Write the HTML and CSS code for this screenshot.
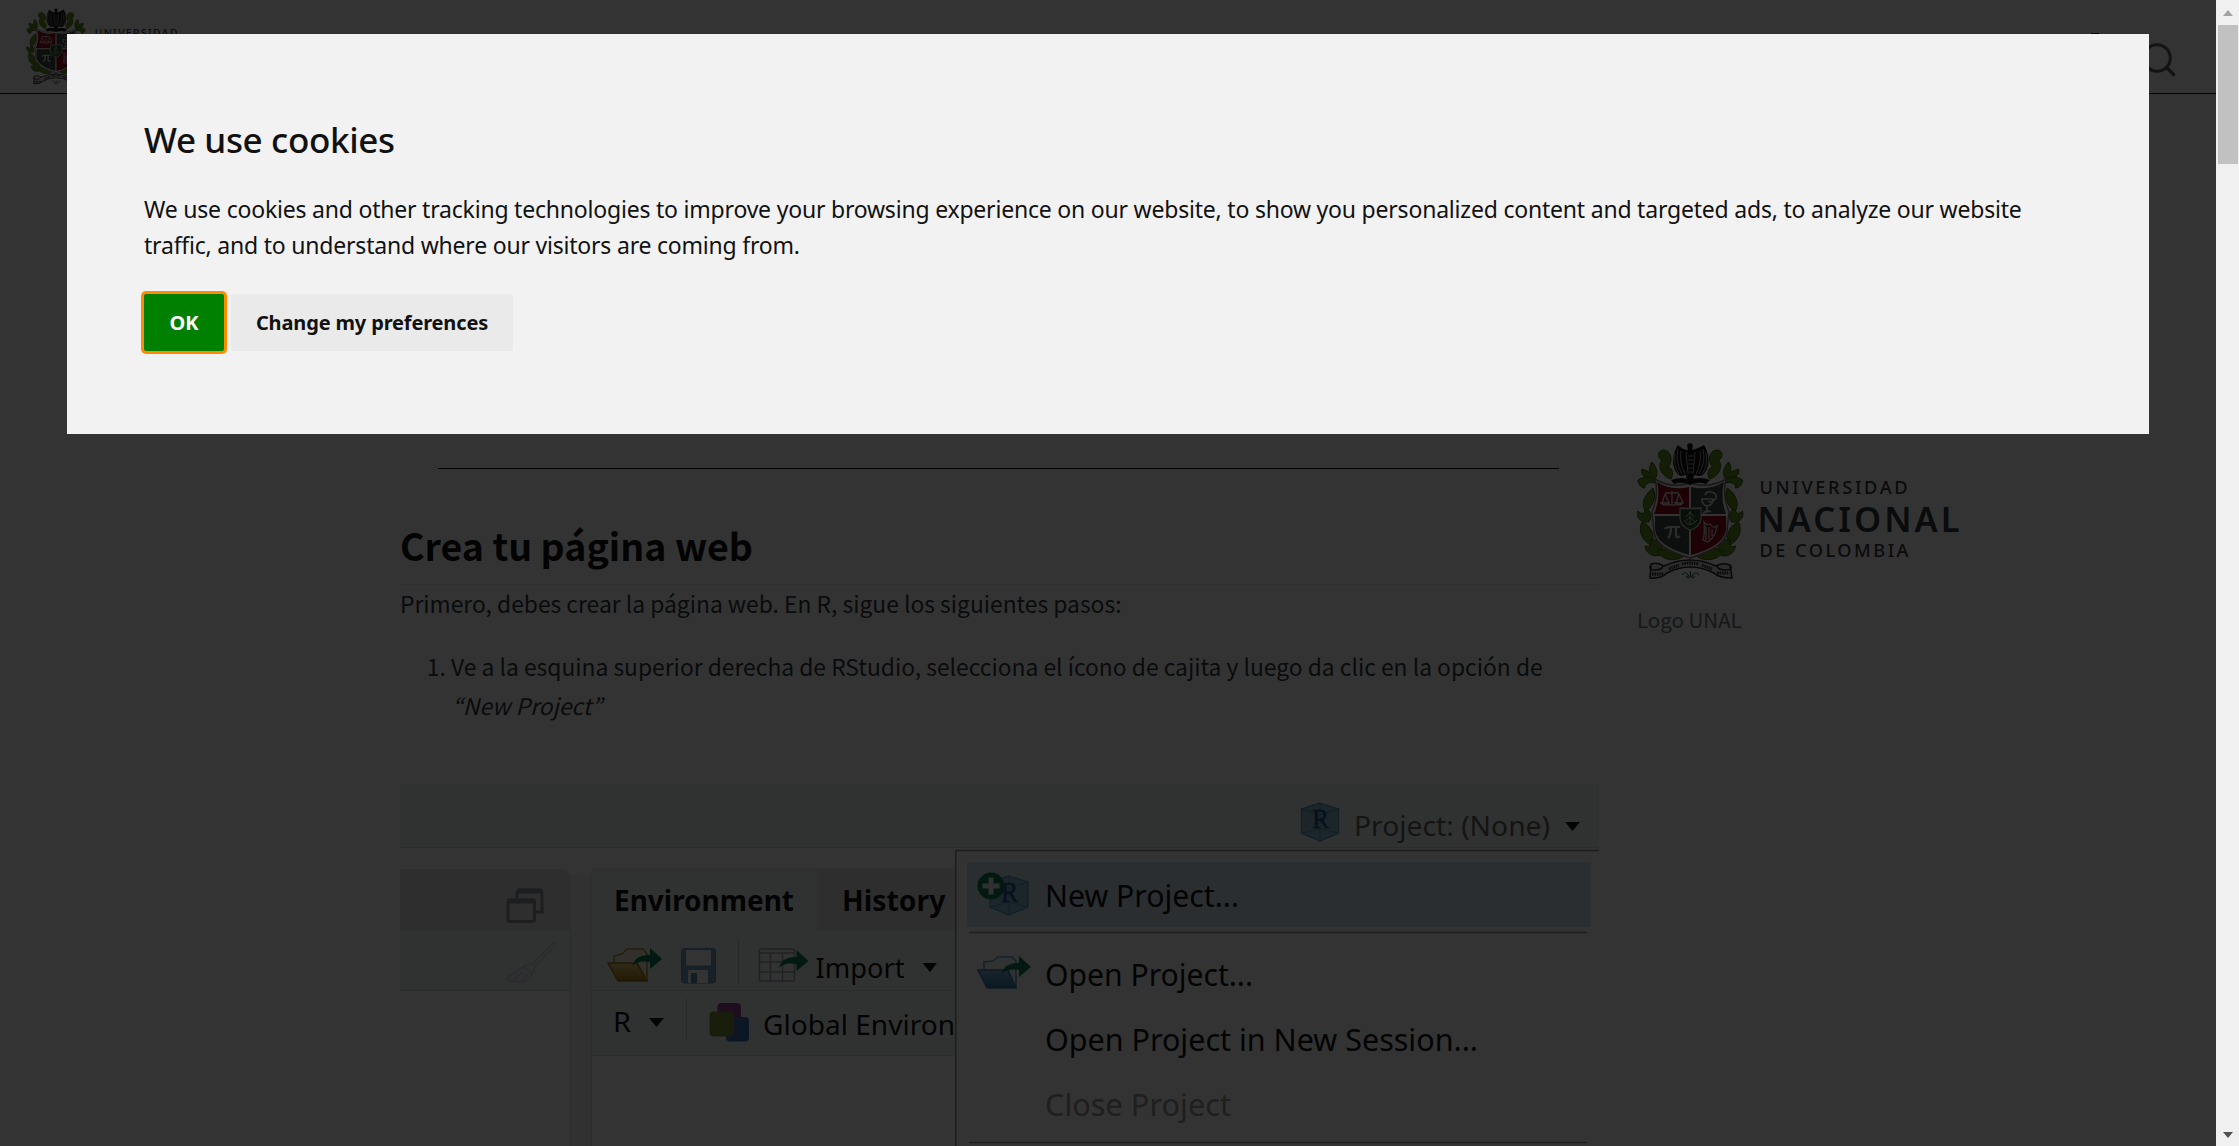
FILE: index.html
```html
<!DOCTYPE html>
<html lang="es">
<head>
<meta charset="utf-8">
<title>Crea tu página web</title>
<link rel="stylesheet" href="styles.css">
</head>
<body>
<svg class="defs" aria-hidden="true">
  <defs>
    <linearGradient id="gold" x1="0" y1="0" x2="0" y2="1"><stop offset="0" stop-color="#f3d27a"/><stop offset="1" stop-color="#b58210"/></linearGradient>
    <linearGradient id="azure" x1="0" y1="0" x2="0" y2="1"><stop offset="0" stop-color="#7fb4dc"/><stop offset="1" stop-color="#2d77ad"/></linearGradient>
    <g id="leaves" fill="#64901a" stroke="#3a5a0a" stroke-width="1">
      <path d="M34 37C24 34 20 24 25 18C20 16 20 8 27 8C35 9 36 20 31 25C37 27 36 33 34 37Z"/>
      <path d="M17 38C7 37 3 31 5 27C9 28 12 30 13 31C12 27 13 22 15 20C20 25 22 33 17 38Z"/>
      <path d="M18 41C11 39 7 43 8 46C4 46 1 42 1 38C8 33 18 35 20 39Z"/>
      <path d="M9 70C3 62 8 52 16 46C20 54 17 62 9 70Z"/>
      <path d="M12 80C3 81 -1 75 1 69C5 73 8 72 8 67C15 68 15 76 12 80Z"/>
      <path d="M15 104C4 98 1 88 5 80C15 84 18 94 15 104Z"/>
      <path d="M26 111C20 117 9 113 8 104C13 106 15 102 13 98C21 96 26 103 26 111Z"/>
      <path d="M46 115C34 121 24 116 20 109C32 104 42 107 46 115Z"/>
    </g>
    <symbol id="unal" viewBox="0 0 323 138">
      <use href="#leaves"/>
      <use href="#leaves" transform="translate(106.500 0) scale(-1 1)"/>
      <path d="M18 37Q34 47 53 41Q72 47 89 37Q85 52 92 70Q90 87 90 91Q87 106 53 116Q20 107 17 91L15 70Q22 52 18 37Z" fill="#fff" stroke="#777" stroke-width="1.500"/>
      <path d="M20 40Q34 49 52 45V72H17Q24 55 20 40Z" fill="#940618"/>
      <path d="M54 45Q72 49 87 40Q83 56 89 72H54Z" fill="#444e4b"/>
      <path d="M18 74H52V113Q20 104 18 88Z" fill="#444e4b"/>
      <path d="M54 74H89V88Q87 104 54 113Z" fill="#940618"/>
      <path d="M43 66Q53 67 64 66V77Q63 85 53.500 88Q44 85 43 77Z" fill="#26542c" stroke="#cdd3cc" stroke-width="1.300"/>
      <path d="M53 69V83M49 75L53 70L57 75M48 80L53 75L58 80M47 78Q53 87 60 78" fill="none" stroke="#c5d2c3" stroke-width="1"/>
      <g fill="none" stroke="#ddd" stroke-width="1.300">
        <path d="M28 51H42M35 49V62M31 63H39M28 52L25 61M28 52L32 61M42 52L39 61M42 52L46 61M24 61Q28 65 32 61ZM38 61Q42 65 46 61Z"/>
        <path d="M68 53Q69 49 74 50Q80 51 79 56Q77 60 71 60M65 57H76Q76 63 70 64Q65 63 65 57ZM70 64V71M66 72Q69 67 74 70" stroke-width="1.600"/>
        <path d="M28 87Q29 85 33 85H43M34 85Q34 93 31 96M39 85V94Q40 97 43 94" stroke-width="2.200"/>
        <path d="M67 80Q68 93 66 98L71 100Q79 94 80 84Q76 87 73 82Q70 84 67 80ZM69 84V98M72 85V97M75 87V94"/>
      </g>
      <g fill="#111">
        <path d="M50 3Q53-1 56 3L55 8Q60 7 67 3Q73 12 71 24Q68 34 62 34L57 33L56 38H50L49 33L44 34Q38 32 36 22Q36 9 41 3Q46 8 51 8Z"/>
        <path d="M34 38Q45 34 53 38Q63 34 73 38L69 42Q60 39 53 43Q45 39 37 42Z"/>
      </g>
      <path d="M38 11Q36 24 42 32M41 7Q38 20 45 32M44 9Q42 20 48 32M69 11Q71 24 65 32M66 7Q69 20 62 32M63 9Q65 20 59 32M51 14H56M51 18H56M51 22H56M51 26H56M52 30H55M49 10L51 32M58 10L56 32" fill="none" stroke="#bbb" stroke-width=".9"/>
      <path d="M14 122Q21 120 27 124Q53 112 79 124Q86 120 93 123L95 136Q82 136 77 131Q53 119 30 131Q24 137 13 136Z" fill="#ddd" stroke="#222" stroke-width="1.500"/>
      <path d="M13 124Q12 128 18 128Q25 128 26 124M94 124Q95 128 89 128Q81 128 80 124" fill="none" stroke="#222" stroke-width="1.500"/>
      <path d="M15 132H27M32 127L42 123M45 122Q53 120 62 122M65 123L75 127M80 131H92" fill="none" stroke="#333" stroke-width="3" stroke-dasharray="1.600 .8"/>
      <path d="M45 133Q48 128 52 134Q53 138 49 134M62 133Q59 128 55 134Q54 138 58 134M53.500 129V135" fill="none" stroke="#466f4a" stroke-width="1.200"/>
      <g fill="#343a3c" font-family="Noto Sans, sans-serif">
        <text x="122.500" y="52" font-size="18.200" font-weight="500" textLength="148">UNIVERSIDAD</text>
        <text x="120.500" y="89.500" font-size="34.500" font-weight="600" textLength="202">NACIONAL</text>
        <text x="122.500" y="115" font-size="18.200" font-weight="500" textLength="149">DE COLOMBIA</text>
      </g>
    </symbol>
    <symbol id="cube" viewBox="0 0 40 41">
      <path d="M20 1L39 7V32L20 40L1 32V7Z" fill="#8bb8cc" stroke="#4b9ab5" stroke-width="1.200"/>
      <path d="M1 7L20 13L39 7M20 1V40M1 32L20 27L39 32" fill="none" stroke="#4b9ab5" stroke-width="1"/>
      <text x="12" y="27" textLength="17" lengthAdjust="spacingAndGlyphs" font-family="Liberation Serif, serif" font-size="29" fill="#2c5394" stroke="#2c5394" stroke-width=".7">R</text>
    </symbol>
    <path id="swoosh" d="M0 18Q4 6 18 7V0L30 11L18 21V14Q6 12 0 18Z" fill="#087c53"/>
  </defs>
</svg>
<div class="window">
  <div class="page">
    <header class="navbar">
      <svg class="nav-logo"><use href="#unal"/></svg>
      <div class="nav-tools">
        <svg class="nav-mark" viewBox="0 0 8 20"><path d="M0 0H8V3H3V20H0Z" fill="#111"/></svg>
        <svg class="nav-search" viewBox="0 0 34 34"><circle cx="15" cy="15" r="13.300" fill="none" stroke="#5c6167" stroke-width="3"/><path d="M24.500 24.500L31.500 31.500" stroke="#5c6167" stroke-width="3.500" stroke-linecap="round"/></svg>
      </div>
    </header>
    <div class="layout">
      <main class="content">
        <hr class="rule">
        <h2 class="section-title">Crea tu página web</h2>
        <p class="intro">Primero, debes crear la página web. En R, sigue los siguientes pasos:</p>
        <ol class="steps">
          <li>Ve a la esquina superior derecha de RStudio, selecciona el ícono de cajita y luego da clic en la opción de<br><em class="quoted">“New Project”</em></li>
        </ol>
        <svg class="shot" viewBox="400 784 1199 362">
          <rect x="400" y="784" width="1199" height="362" fill="#fefefe"/>
          <rect x="400" y="784" width="1199" height="63" fill="#f0f6f5"/>
          <path d="M400 847.500H1599" stroke="#cfdede"/>
          <!-- left pane -->
          <path d="M400 869H561Q570 869 570 879V929H400Z" fill="#e6e6e7"/>
          <rect x="400" y="929" width="170" height="61" fill="#f0f5f5"/>
          <path d="M400 929.500H570M400 990.500H570" stroke="#d5dfe0"/>
          <rect x="570" y="875" width="21" height="271" fill="#f6f6f8"/>
          <path d="M570.500 875V1146M591.500 1146V875" stroke="#dcdfe1"/>
          <g fill="none" stroke="#8d979f" stroke-width="3"><path d="M517 898V893Q517 890 520.500 890H538.500Q542 890 542 893V912H535.500"/><rect x="508" y="900" width="26.500" height="21.500" rx="1.500"/></g>
          <path d="M517 891H541.500M508 901H534.500" stroke="#8d979f" stroke-width="5"/>
          <path d="M553 943L533 963L524 966L508 977Q506 981 510 981L524 982Q532 979 535 967L555 945Q556 941 553 943Z" fill="#eceef2" stroke="#cdd1da" stroke-width="1.300"/>
          <path d="M524 966L532 974M514 980L522 972M521 981L527 975" stroke="#cdd1da" stroke-width="1.300"/>
          <!-- environment pane -->
          <path d="M591 990V875Q591 869 597 869H956V990Z" fill="#f0f6f5"/>
          <rect x="817" y="869" width="139" height="60" fill="#e6e6e7"/>
          <rect x="592" y="991" width="364" height="64" fill="#f0f5f5"/>
          <path d="M591 990V875Q591 869 597 869H956M817.500 869V929.500H956M591 990.500H956M591 1055.500H956" fill="none" stroke="#d5dfe0"/>
          <g font-family="Noto Sans, sans-serif" font-size="28" fill="#111">
            <text x="614" y="911" font-weight="700" textLength="180" lengthAdjust="spacingAndGlyphs">Environment</text>
            <text x="842" y="911" font-weight="700" textLength="103.500" lengthAdjust="spacingAndGlyphs">History</text>
            <text x="815.500" y="977.500" textLength="89" lengthAdjust="spacingAndGlyphs">Import</text>
            <text x="613" y="1032" textLength="18" lengthAdjust="spacingAndGlyphs">R</text>
            <text x="763" y="1035" textLength="192" lengthAdjust="spacingAndGlyphs">Global Environ</text>
            <text x="1354" y="836" textLength="196" lengthAdjust="spacingAndGlyphs" fill="#666">Project: (None)</text>
          </g>
          <path d="M922.500 963H937L930 972ZM649 1018H664L656.500 1027ZM1565 822H1580L1572.500 831Z" fill="#111"/>
          <path d="M738.500 940V984M686.500 998V1040" stroke="#c7cdcd"/>
          <path d="M614 965V956L622 954L627 949H643L647 954V981" fill="#f5f0df" stroke="#bd9641" stroke-width="1.600"/>
          <path d="M608 963H637L647 981H618Z" fill="url(#gold)" stroke="#a87e1b" stroke-width="1.600"/>
          <use href="#swoosh" x="632" y="948"/>
          <rect x="681.500" y="948.500" width="34" height="34.500" rx="3" fill="#7ba2c6" stroke="#628fb8"/>
          <rect x="686" y="950" width="25" height="15.500" fill="#fcfcfc"/><rect x="688" y="970" width="20" height="13" fill="#fcfcfc"/><rect x="691" y="973" width="6" height="10" fill="#628fb8"/>
          <rect x="759.500" y="949" width="35" height="32" rx="2" fill="#f8f9fb" stroke="#9fa6b3" stroke-width="1.500"/>
          <path d="M759 953H795M759 962H795M759 972H795M770.500 953V981M782.500 953V981" stroke="#9fa6b3" stroke-width="1.500"/>
          <use href="#swoosh" x="778.500" y="950"/>
          <rect x="717.500" y="1003" width="23.500" height="25" rx="4" fill="#914099"/><rect x="726" y="1017" width="23" height="24.500" rx="4" fill="#4170b4"/><rect x="709.500" y="1011.500" width="24" height="25" rx="4" fill="#7e963f"/>
          <use href="#cube" x="1300" y="802" width="40" height="40"/>
          <!-- project menu -->
          <rect x="955.500" y="850" width="643.500" height="296" fill="#fefefe"/>
          <path d="M955.800 1146V850.500H1599" fill="none" stroke="#8d8d8d" stroke-width="1.500"/>
          <rect x="967" y="862" width="623.500" height="65" fill="#d6e3ef"/>
          <path d="M969 932.500H1587M969 1142.500H1587" stroke="#999" stroke-width="1.300"/>
          <use href="#cube" x="989" y="875" width="40" height="41"/>
          <circle cx="991" cy="886" r="13.500" fill="#087c53"/><path d="M991 877.500V894.500M982.500 886H999.500" stroke="#e8f2f2" stroke-width="5"/>
          <path d="M984 970V962L993 961L998 957H1012L1016 961V988" fill="#f3f8fb" stroke="#68a5c7" stroke-width="1.600"/>
          <path d="M978 970H1008L1016 988H987Z" fill="url(#azure)" stroke="#3a83b2" stroke-width="1.600"/>
          <use href="#swoosh" x="1001" y="956"/>
          <g font-family="Noto Sans, sans-serif" font-size="31" fill="#111">
            <text x="1045" y="907" textLength="194" lengthAdjust="spacingAndGlyphs">New Project...</text>
            <text x="1045" y="986" textLength="208" lengthAdjust="spacingAndGlyphs">Open Project...</text>
            <text x="1045" y="1051" textLength="433" lengthAdjust="spacingAndGlyphs">Open Project in New Session...</text>
            <text x="1045" y="1116" textLength="186" lengthAdjust="spacingAndGlyphs" fill="#999">Close Project</text>
          </g>
        </svg>
      </main>
      <aside class="sidebar">
        <svg class="side-logo"><use href="#unal"/></svg>
        <p class="caption">Logo UNAL</p>
      </aside>
    </div>
    <div class="overlay">
      <section class="dialog">
        <h1 class="dialog-title">We use cookies</h1>
        <p class="dialog-text">We use cookies and other tracking technologies to improve your browsing experience on our website, to show you personalized content and targeted ads, to analyze our website<br>traffic, and to understand where our visitors are coming from.</p>
        <div class="actions">
          <button class="btn btn-ok">OK</button>
          <button class="btn btn-prefs">Change my preferences</button>
        </div>
      </section>
    </div>
  </div>
  <div class="scrollbar">
    <svg class="arrow" viewBox="0 0 10 6"><path d="M5 0L10 6H0Z" fill="#a3a3a3"/></svg>
    <div class="thumb"></div>
    <svg class="arrow arrow-down" viewBox="0 0 10 6"><path d="M0 0H10L5 6Z" fill="#505050"/></svg>
  </div>
</div>
</body>
</html>
```

FILE: styles.css
```css
* { box-sizing: border-box; }
body { margin: 0; overflow: hidden; background: #fff; }
.defs { display: block; width: 0; height: 0; }
.window { display: flex; width: 2239px; height: 1146px; overflow: hidden; }
.page { position: relative; flex: 1; height: 1146px; overflow: hidden; color: #343a40; font: 22.84px/39px "Noto Sans CJK JP", sans-serif; }

.navbar { display: flex; justify-content: space-between; height: 94px; padding: 8px 40px 0 26px; border-bottom: 1px solid #000; }
.nav-logo { width: 181px; height: 77px; }
.nav-tools { display: flex; gap: 43px; padding-top: 25px; }
.nav-mark { width: 8px; height: 20px; }
.nav-search { width: 34px; height: 34px; margin-top: 10px; }

.layout { display: grid; grid-template-columns: 1199px 323px; column-gap: 38px; padding-left: 400px; }
.content { padding-top: 374px; }
.rule { width: 1121px; height: 1px; margin: 0 0 0 38px; border: 0; background: #000; }
.section-title { height: 61px; margin: 55px 0 0; border-bottom: 1px solid #e4e8eb; color: #111; font-size: 37.5px; font-weight: 700; line-height: 42px; }
.intro { margin: -1px 0 0; }
.steps { margin: 24px 0 0; padding-left: 51px; white-space: nowrap; }
.quoted { margin-left: 1px; }
.shot { display: block; width: 1199px; height: 362px; margin-top: 59px; }

.sidebar { padding-top: 348px; }
.side-logo { display: block; width: 323px; height: 138px; }
.caption { margin: 20px 0 0; color: #6c757d; font-size: 20.5px; }

.overlay { position: absolute; inset: 0; display: flex; align-items: flex-start; padding: 34px 67px; background: rgba(0, 0, 0, .8); }
.dialog { width: 2082px; height: 400px; padding: 77px; background: #f2f2f2; color: #111; font-family: "Noto Sans", sans-serif; }
.dialog-title { margin: 0; font-size: 35px; font-weight: 500; line-height: 58px; letter-spacing: -.36px; }
.dialog-text { margin: 22px 0 0; font-size: 23px; line-height: 36px; letter-spacing: -.205px; white-space: nowrap; }
.actions { display: flex; gap: 7px; margin-top: 31px; }
.btn { height: 57px; padding: 1px 0 0; border: 0; border-radius: 2px; font: 700 20px/56px "Noto Sans", sans-serif; letter-spacing: -.15px; }
.btn-ok { width: 80px; background: #008000; color: #fff; box-shadow: 0 0 0 3px #ff8c00; }
.btn-prefs { width: 282px; background: #eaeaea; color: #111; }

.scrollbar { display: flex; flex-direction: column; align-items: center; width: 23px; padding: 10px 0 8px 1px; background: #f0f0f0; }
.arrow { width: 10px; height: 6px; }
.thumb { width: 20px; height: 139px; margin-top: 9px; background: #c1c1c1; }
.arrow-down { margin-top: auto; }
```
